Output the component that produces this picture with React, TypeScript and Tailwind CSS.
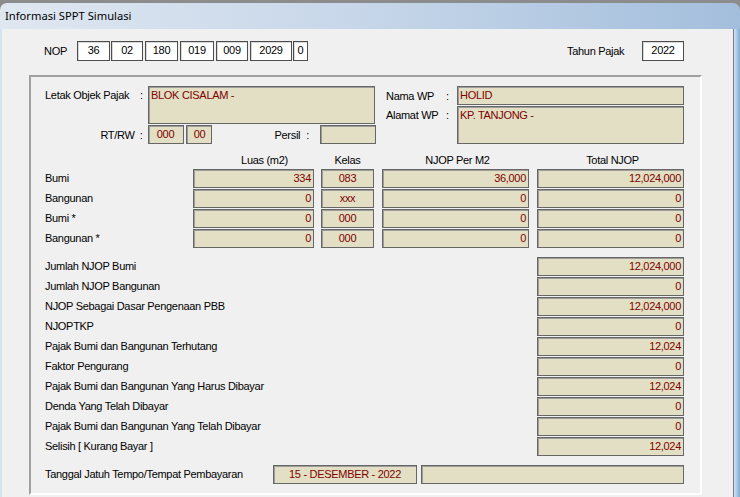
import React from "react";

const fieldBase =
  "h-[19px] bg-[#e2dfc4] border border-[#676767] shadow-[inset_1px_1px_0_#9c9c9c] text-[#800000] leading-[16px] px-[2px] whitespace-nowrap overflow-hidden";

function Field({
  w,
  align = "right",
  children,
  h,
}: {
  w: string;
  align?: "left" | "right" | "center";
  children?: React.ReactNode;
  h?: string;
}) {
  const a = align === "right" ? "text-right" : align === "center" ? "text-center" : "text-left";
  return <div className={`${fieldBase} ${w} ${a} ${h ?? ""} shrink-0`}>{children}</div>;
}

function NopBox({ w, children }: { w: string; children: React.ReactNode }) {
  return (
    <div
      className={`${w} h-[20px] shrink-0 bg-white border border-[#4d4d4d] shadow-[inset_1px_1px_0_#d8d8d8] text-center leading-[16px]`}
    >
      {children}
    </div>
  );
}

const tableRows = [
  ["Bumi", "334", "083", "36,000", "12,024,000"],
  ["Bangunan", "0", "xxx", "0", "0"],
  ["Bumi *", "0", "000", "0", "0"],
  ["Bangunan *", "0", "000", "0", "0"],
];

const sumRows = [
  ["Jumlah NJOP Bumi", "12,024,000"],
  ["Jumlah NJOP Bangunan", "0"],
  ["NJOP Sebagai Dasar Pengenaan PBB", "12,024,000"],
  ["NJOPTKP", "0"],
  ["Pajak Bumi dan Bangunan Terhutang", "12,024"],
  ["Faktor Pengurang", "0"],
  ["Pajak Bumi dan Bangunan Yang Harus Dibayar", "12,024"],
  ["Denda Yang Telah Dibayar", "0"],
  ["Pajak Bumi dan Bangunan Yang Telah Dibayar", "0"],
  ["Selisih [ Kurang Bayar ]", "12,024"],
];

export default function App() {
  return (
    <div className="w-[740px] h-[497px] overflow-hidden bg-[#8c8c8c] pt-[3px] font-['Liberation_Sans',Arial,sans-serif] text-[11px] tracking-[-0.3px] text-black">
      <div className="h-[494px] flex flex-col rounded-t-[7px] overflow-hidden bg-linear-to-r from-[#dfe7f1] via-[#c6d6e9] to-[#a3bedc]">
        {/* Title bar */}
        <div className="h-[26px] shrink-0 flex items-center pl-[5px] font-['Noto_Sans',sans-serif] text-[11.2px] tracking-normal text-black">
          Informasi SPPT Simulasi
        </div>
        <div className="flex flex-1 min-h-0">
          <div className="w-[2px] bg-[#d6e2ef]" />
          <div className="flex-1 bg-[#f0f0f0] pt-[12px]">
            {/* NOP row */}
            <div className="flex items-center h-[20px] pl-[42px]">
              <div className="w-[33px]">NOP</div>
              <NopBox w="w-[33px]">36</NopBox>
              <div className="w-[1px]" />
              <NopBox w="w-[32px]">02</NopBox>
              <div className="w-[2px]" />
              <NopBox w="w-[33px]">180</NopBox>
              <div className="w-[2px]" />
              <NopBox w="w-[34px]">019</NopBox>
              <div className="w-[2px]" />
              <NopBox w="w-[32px]">009</NopBox>
              <div className="w-[2px]" />
              <NopBox w="w-[42px]">2029</NopBox>
              <div className="w-[1px]" />
              <NopBox w="w-[15px]">0</NopBox>
              <div className="w-[259px]" />
              <div className="w-[75px]">Tahun Pajak</div>
              <NopBox w="w-[42px]">2022</NopBox>
            </div>

            {/* Group box */}
            <div className="mt-[14px] ml-[27px] w-[673px] h-[420px] border-2 border-t-[#a0a0a0] border-l-[#a0a0a0] border-r-white border-b-white pl-[14px] pt-[9px]">
              {/* Section 1 */}
              <div className="flex">
                <div className="w-[331px] flex flex-col gap-[1px]">
                  <div className="flex">
                    <div className="w-[95px] h-[19px] leading-[18px]">Letak Objek Pajak</div>
                    <div className="w-[8px] h-[19px] leading-[18px]">:</div>
                    <Field w="w-[227px]" h="h-[38px]" align="left">
                      BLOK CISALAM -
                    </Field>
                  </div>
                  <div className="flex items-center h-[19px] leading-[18px]">
                    <div className="w-[90px] text-right">RT/RW</div>
                    <div className="w-[13px] text-center">:</div>
                    <Field w="w-[36px]" align="center">
                      000
                    </Field>
                    <div className="w-[3px]" />
                    <Field w="w-[26px]" align="center">
                      00
                    </Field>
                    <div className="w-[108px] flex justify-end pr-[11px]">
                      <span>Persil</span>
                      <span className="ml-[6px]">:</span>
                    </div>
                    <Field w="w-[56px]" />
                  </div>
                </div>
                <div className="ml-[10px] flex flex-col gap-[1px]">
                  <div className="flex items-center leading-[18px]">
                    <div className="w-[60px]">Nama WP</div>
                    <div className="w-[11px]">:</div>
                    <Field w="w-[227px]" align="left">
                      HOLID
                    </Field>
                  </div>
                  <div className="flex">
                    <div className="w-[60px] h-[19px] leading-[18px]">Alamat WP</div>
                    <div className="w-[11px] h-[19px] leading-[18px]">:</div>
                    <Field w="w-[227px]" h="h-[38px]" align="left">
                      KP. TANJONG -
                    </Field>
                  </div>
                </div>
              </div>

              {/* Table header */}
              <div className="flex items-end h-[25px] pb-[2px] leading-[13px]">
                <div className="w-[148px]" />
                <div className="w-[121px] text-center pl-[22px]">Luas (m2)</div>
                <div className="w-[7px]" />
                <div className="w-[53px] text-center">Kelas</div>
                <div className="w-[8px]" />
                <div className="w-[147px] text-center pl-[4px]">NJOP Per M2</div>
                <div className="w-[8px]" />
                <div className="w-[147px] text-center pl-[4px]">Total NJOP</div>
              </div>

              {/* Table rows */}
              <div className="flex flex-col gap-[1px]">
                {tableRows.map((r) => (
                  <div key={r[0]} className="flex items-center h-[19px]">
                    <div className="w-[148px] leading-[18px] self-start">{r[0]}</div>
                    <Field w="w-[121px]">{r[1]}</Field>
                    <div className="w-[7px]" />
                    <Field w="w-[53px]" align="center">
                      {r[2]}
                    </Field>
                    <div className="w-[8px]" />
                    <Field w="w-[147px]">{r[3]}</Field>
                    <div className="w-[8px]" />
                    <Field w="w-[147px]">{r[4]}</Field>
                  </div>
                ))}
              </div>

              {/* Summary rows */}
              <div className="mt-[9px] flex flex-col gap-[1px]">
                {sumRows.map((r) => (
                  <div key={r[0]} className="flex items-center h-[19px]">
                    <div className="w-[492px] leading-[18px] self-start">{r[0]}</div>
                    <Field w="w-[147px]">{r[1]}</Field>
                  </div>
                ))}
              </div>

              {/* Tanggal */}
              <div className="mt-[9px] flex items-center h-[19px]">
                <div className="w-[228px] leading-[18px] self-start">Tanggal Jatuh Tempo/Tempat Pembayaran</div>
                <Field w="w-[144px]" align="center">
                  15 - DESEMBER - 2022
                </Field>
                <div className="w-[4px]" />
                <Field w="w-[263px]" />
              </div>
            </div>
          </div>
          <div className="w-[7px] border-l border-[#7d7d7d] bg-linear-to-r from-[#d3e4f4] to-[#7fa9d6]" />
        </div>
      </div>
    </div>
  );
}
